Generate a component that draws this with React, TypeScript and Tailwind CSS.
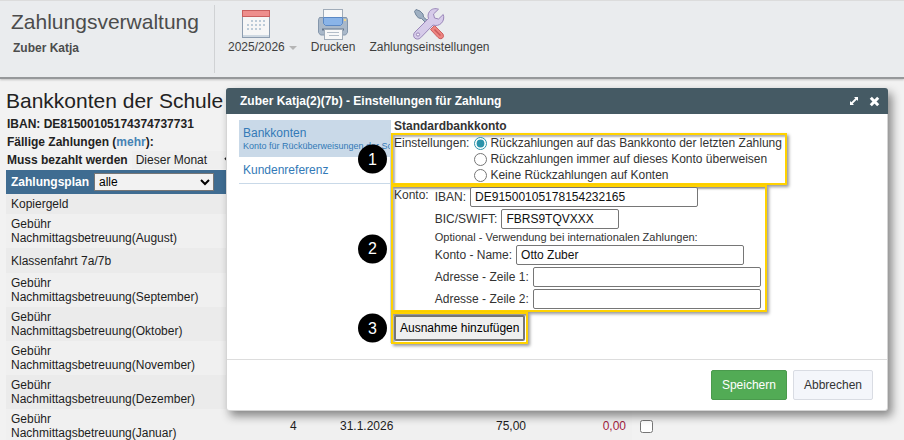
import type { ReactNode } from "react"

type Payment = {
  lines: string[]
  count?: string
  due?: string
  amount?: string
  open?: string
  rowClass: string
}

const payments: Payment[] = [
  { lines: ["Kopiergeld"], rowClass: "h-5 bg-[#ebebeb]" },
  { lines: ["Gebühr", "Nachmittagsbetreuung(August)"], rowClass: "h-[34px] bg-[#f0f0f0]" },
  { lines: ["Klassenfahrt 7a/7b"], rowClass: "h-[25px] bg-[#ebebeb]" },
  { lines: ["Gebühr", "Nachmittagsbetreuung(September)"], rowClass: "h-[34px] bg-[#f0f0f0]" },
  { lines: ["Gebühr", "Nachmittagsbetreuung(Oktober)"], rowClass: "h-[34px] bg-[#ebebeb]" },
  { lines: ["Gebühr", "Nachmittagsbetreuung(November)"], rowClass: "h-[34px] bg-[#f0f0f0]" },
  { lines: ["Gebühr", "Nachmittagsbetreuung(Dezember)"], rowClass: "h-[34px] bg-[#ebebeb]" },
  {
    lines: ["Gebühr", "Nachmittagsbetreuung(Januar)"],
    count: "4",
    due: "31.1.2026",
    amount: "75,00",
    open: "0,00",
    rowClass: "h-[34px] bg-[#f0f0f0]",
  },
]

const refundOptions = [
  "Rückzahlungen auf das Bankkonto der letzten Zahlung",
  "Rückzahlungen immer auf dieses Konto überweisen",
  "Keine Rückzahlungen auf Konten",
]

function CalendarIcon() {
  return (
    <svg width="32" height="32" viewBox="0 0 32 32" aria-hidden="true">
      <rect x="2.5" y="2.5" width="27" height="27" fill="#f6f6f6" stroke="#8d9db0" />
      <rect x="3" y="27" width="26" height="2" fill="#cfd9e2" />
      <rect x="2.5" y="2.5" width="27" height="6" fill="#ee8e8c" stroke="#c9605f" />
      <g fill="#bccbd8">
        {[11, 15, 19, 23].map((x) => <rect key={x} x={x} y="12" width="2" height="2" />)}
        {[7, 11, 15, 19, 23].map((x) => <rect key={x} x={x} y="16" width="2" height="2" />)}
        {[7, 11, 15, 19].map((x) => <rect key={x} x={x} y="20" width="2" height="2" />)}
      </g>
    </svg>
  )
}

function PrinterIcon() {
  return (
    <svg width="32" height="32" viewBox="0 0 32 32" aria-hidden="true">
      <path d="M2.500 9.500h27l1 2v13l-2 2.500h-25l-2-2.500v-13z" fill="#a9b8c9" stroke="#8496ab" />
      <rect x="6.500" y="1.500" width="19" height="10" fill="#f8f8f8" stroke="#a0acb9" />
      <path d="M6.500 9.500h19v6l-2 2h-15l-2-2z" fill="#8ab4e8" stroke="#5b88c4" />
      <rect x="27" y="11" width="2" height="2" fill="#f3d88a" />
      <path d="M5 21.500h22" stroke="#66788e" strokeWidth="2" />
      <rect x="7.500" y="21.500" width="18" height="10" fill="#f8f8f8" stroke="#a0acb9" />
      <path d="M10 24.500h12M12 27.500h10" stroke="#b3bdc8" />
    </svg>
  )
}

function ToolsIcon() {
  return (
    <svg width="32" height="32" viewBox="0 0 32 32" aria-hidden="true">
      <path d="M1.500 3.500 3 1.500l4 1.500 3 3 .5 3L16 14l-2 2-5.500-5.500-3-.5-2.500-3z" fill="#9fb0c2" stroke="#71849a" />
      <path d="m17.500 21.500 4-4 8.500 8.500q1.500 3-1 4.500-2 1-4-1z" fill="#ed8480" stroke="#cc5f60" />
      <path d="m21.500 21.500 6 6" stroke="#c95a5b" strokeWidth="1.500" />
      <path
        d="M25.500 1.200c-3-1.200-7-.5-9 2.300-1.700 2.300-1.700 4.800-1 7L2 24c-2 2-1.700 4.600-.3 6 1.500 1.500 4.300 1.500 6-.3L20 17c3 1 6 .5 8.300-1.700 2.500-2.500 3-6 1.900-8.800L25.500 11l-4-1-1-4z"
        fill="#d6cbe9"
        stroke="#9a86b9"
      />
      <circle cx="5" cy="26.500" r="1.600" fill="#f5f2fa" stroke="#9a86b9" />
    </svg>
  )
}

function ToolbarButton({ icon, label, menu }: { icon: ReactNode; label: string; menu?: boolean }) {
  return (
    <button type="button" className="relative flex flex-col items-center text-xs leading-[14px] text-[#3f3f3f]">
      {icon}
      <span>{label}</span>
      {menu && (
        <span className="absolute -right-3 bottom-1 border-x-4 border-t-4 border-x-transparent border-t-[#b5b5b5]" />
      )}
    </button>
  )
}

function Header() {
  return (
    <header className="flex h-[79px] border-t border-b-2 border-t-[#dcdcdc] border-b-[#96989a] bg-[#eaecee] shadow-[0_1px_2px_rgba(0,0,0,0.2)]">
      <div className="my-1 w-[215px] border-r border-[#d0d2d4] pt-[5px] pl-[11px] text-[#4c4c4c]">
        <h1 className="text-[21px] leading-6">Zahlungsverwaltung</h1>
        <p className="mt-1.5 pl-0.5 text-xs leading-4 font-bold">Zuber Katja</p>
      </div>
      <nav className="flex items-start gap-3.5 pt-[7px] pl-[13px]">
        <div className="pr-3">
          <ToolbarButton icon={<CalendarIcon />} label="2025/2026" menu />
        </div>
        <ToolbarButton icon={<PrinterIcon />} label="Drucken" />
        <ToolbarButton icon={<ToolsIcon />} label="Zahlungseinstellungen" />
      </nav>
    </header>
  )
}

function PaymentTable() {
  return (
    <table className="mt-px w-full table-fixed border-collapse text-xs leading-[14px] text-[#1d1d1d]">
      <colgroup>
        <col className="w-[270px]" />
        <col className="w-[36px]" />
        <col className="w-[98px]" />
        <col className="w-[120px]" />
        <col className="w-[102px]" />
        <col />
      </colgroup>
      <thead>
        <tr className="h-6">
          <th colSpan={5} className="bg-[#3f6c91] p-0 pl-[5px] text-left font-bold text-white">
            <label className="flex items-center gap-[5px]">
              Zahlungsplan
              <select className="h-[18px] w-[120px] border border-[#767676] bg-[#f2f2f2] font-normal text-black">
                <option>alle</option>
              </select>
            </label>
          </th>
          <td />
        </tr>
      </thead>
      <tbody>
        {payments.map((payment) => (
          <tr key={payment.lines.join(" ")} className={payment.rowClass}>
            <td className="p-0 pl-[5px]">
              {payment.lines.map((line) => (
                <div key={line}>{line}</div>
              ))}
            </td>
            <td className="p-0 pl-3.5">{payment.count}</td>
            <td className="p-0 pl-7">{payment.due}</td>
            <td className="p-0 pr-1 text-right">{payment.amount}</td>
            <td className="p-0 pr-1.5 text-right text-[#a02040]">{payment.open}</td>
            <td className="bg-[#f2f2f2] p-0 pl-2">
              {payment.open && <input type="checkbox" aria-label={payment.lines[1]} className="block size-[13px]" />}
            </td>
          </tr>
        ))}
      </tbody>
    </table>
  )
}

function Marker({ number }: { number: number }) {
  return (
    <span className="absolute top-1/2 -left-[35px] flex size-[29px] -translate-y-1/2 items-center justify-center rounded-full bg-black text-base text-white">
      {number}
    </span>
  )
}

function Highlight({ number, children }: { number: number; children: ReactNode }) {
  return (
    <div className="relative w-fit border-2 border-[#ffd200] shadow-[2px_2px_3px_rgba(0,0,0,0.4),inset_2px_2px_2px_rgba(0,0,0,0.3)]">
      {children}
      <Marker number={number} />
    </div>
  )
}

function Field({ label, value, inputClass }: { label: string; value?: string; inputClass: string }) {
  return (
    <label className="flex items-center gap-1">
      {label}
      <input
        type="text"
        defaultValue={value}
        className={`h-5 rounded-xs border border-[#767676] bg-white px-1 text-[#111] ${inputClass}`}
      />
    </label>
  )
}

function SettingsDialog() {
  return (
    <section
      role="dialog"
      aria-labelledby="dialog-title"
      className="absolute top-[88px] right-4 left-[226px] rounded-[3px] border border-[#d5d5d5] bg-white text-xs text-[#333] shadow-[4px_5px_10px_rgba(0,0,0,0.45)]"
    >
      <div className="-mx-px -mt-px flex h-[26px] items-center justify-between rounded-t-[3px] bg-[#455a64] pr-2 pl-3.5 text-white">
        <h2 id="dialog-title" className="font-bold">
          Zuber Katja(2)(7b) - Einstellungen für Zahlung
        </h2>
        <div className="flex items-center gap-2.5">
          <button type="button" aria-label="Maximieren">
            <svg width="10" height="10" viewBox="0 0 10 10" aria-hidden="true">
              <path d="M5 1h4v4zM1 5v4h4z" fill="white" />
              <path d="m2 8 6-6" stroke="white" strokeWidth="1.800" />
            </svg>
          </button>
          <button type="button" aria-label="Schließen">
            <svg width="11" height="11" viewBox="0 0 11 11" aria-hidden="true">
              <path d="m1.800 1.800 7.400 7.400m0-7.400-7.400 7.400" stroke="white" strokeWidth="3" />
            </svg>
          </button>
        </div>
      </div>

      <div className="flex h-[245px] items-start pt-1.5 pl-3">
        <nav className="flex h-[223px] w-[152px] shrink-0 flex-col overflow-hidden border-r border-[#c9d9e8] text-[#337ab7]">
          <a href="#bankkonten" className="h-[37px] bg-[#c9d9e8] pt-[5px] pl-1 whitespace-nowrap">
            <span className="block leading-4">Bankkonten</span>
            <span className="block text-[9px] leading-[10px]">Konto für Rücküberweisungen der Schule</span>
          </a>
          <a href="#kundenreferenz" className="flex h-[27px] items-center border-b border-[#c9d9e8] pl-1">
            Kundenreferenz
          </a>
        </nav>

        <div className="flex flex-col items-start">
          <h3 className="pl-[3px] leading-[13px] font-bold">Standardbankkonto</h3>
          <Highlight number={1}>
            <div role="radiogroup" aria-labelledby="refund-label" className="flex gap-[5px] pr-[3px] pl-px">
              <span id="refund-label" className="leading-4">
                Einstellungen:
              </span>
              <div>
                {refundOptions.map((option, index) => (
                  <label key={option} className="flex h-4 items-center gap-[3px]">
                    <input
                      type="radio"
                      name="refund"
                      defaultChecked={index === 0}
                      className="size-[13px] accent-[#2b93ab]"
                    />
                    {option}
                  </label>
                ))}
              </div>
            </div>
          </Highlight>
          <Highlight number={2}>
            <div className="flex gap-1.5 pr-1 pb-px pl-px">
              <span className="leading-4">Konto:</span>
              <div className="flex flex-col gap-0.5">
                <Field label="IBAN:" value="DE91500105178154232165" inputClass="w-[228px]" />
                <Field label="BIC/SWIFT:" value="FBRS9TQVXXX" inputClass="w-[118px]" />
                <p className="text-[11px] leading-3">Optional - Verwendung bei internationalen Zahlungen:</p>
                <Field label="Konto - Name:" value="Otto Zuber" inputClass="w-[228px]" />
                <Field label="Adresse - Zeile 1:" inputClass="w-[228px]" />
                <Field label="Adresse - Zeile 2:" inputClass="w-[228px]" />
              </div>
            </div>
          </Highlight>
          <Highlight number={3}>
            <button
              type="button"
              className="m-px block h-[26px] rounded-xs border-2 border-[#767676] bg-[#efefef] px-1 text-black"
            >
              Ausnahme hinzufügen
            </button>
          </Highlight>
        </div>
      </div>

      <div className="flex h-[51px] items-start justify-end gap-1.5 border-t border-[#ddd] pt-2.5 pr-3.5">
        <button type="button" className="h-[30px] rounded-xs border border-[#4a9a4d] bg-[#52ab55] px-2.5 text-white">
          Speichern
        </button>
        <button type="button" className="h-[30px] rounded-xs border border-[#d9dce3] bg-[#f4f6fb] px-2.5">
          Abbrechen
        </button>
      </div>
    </section>
  )
}

export default function App() {
  return (
    <div className="relative h-screen overflow-hidden bg-[#f2f2f2] font-['Liberation_Sans',Arial,sans-serif]">
      <Header />
      <main className="pt-2.5 pl-1.5">
        <h2 className="text-[21px] leading-6 text-[#222]">Bankkonten der Schule</h2>
        <div className="pl-px text-xs leading-[18px] font-bold text-[#222]">
          <p className="pt-0.5">IBAN: DE81500105174374737731</p>
          <p>
            Fällige Zahlungen (
            <a href="#mehr" className="text-[#4682b4]">
              mehr
            </a>
            ):
          </p>
          <label className="flex items-center gap-1">
            Muss bezahlt werden
            <select className="h-[18px] w-[105px] bg-[#efefef] font-normal">
              <option>Dieser Monat</option>
            </select>
          </label>
        </div>
        <PaymentTable />
      </main>
      <SettingsDialog />
    </div>
  )
}
